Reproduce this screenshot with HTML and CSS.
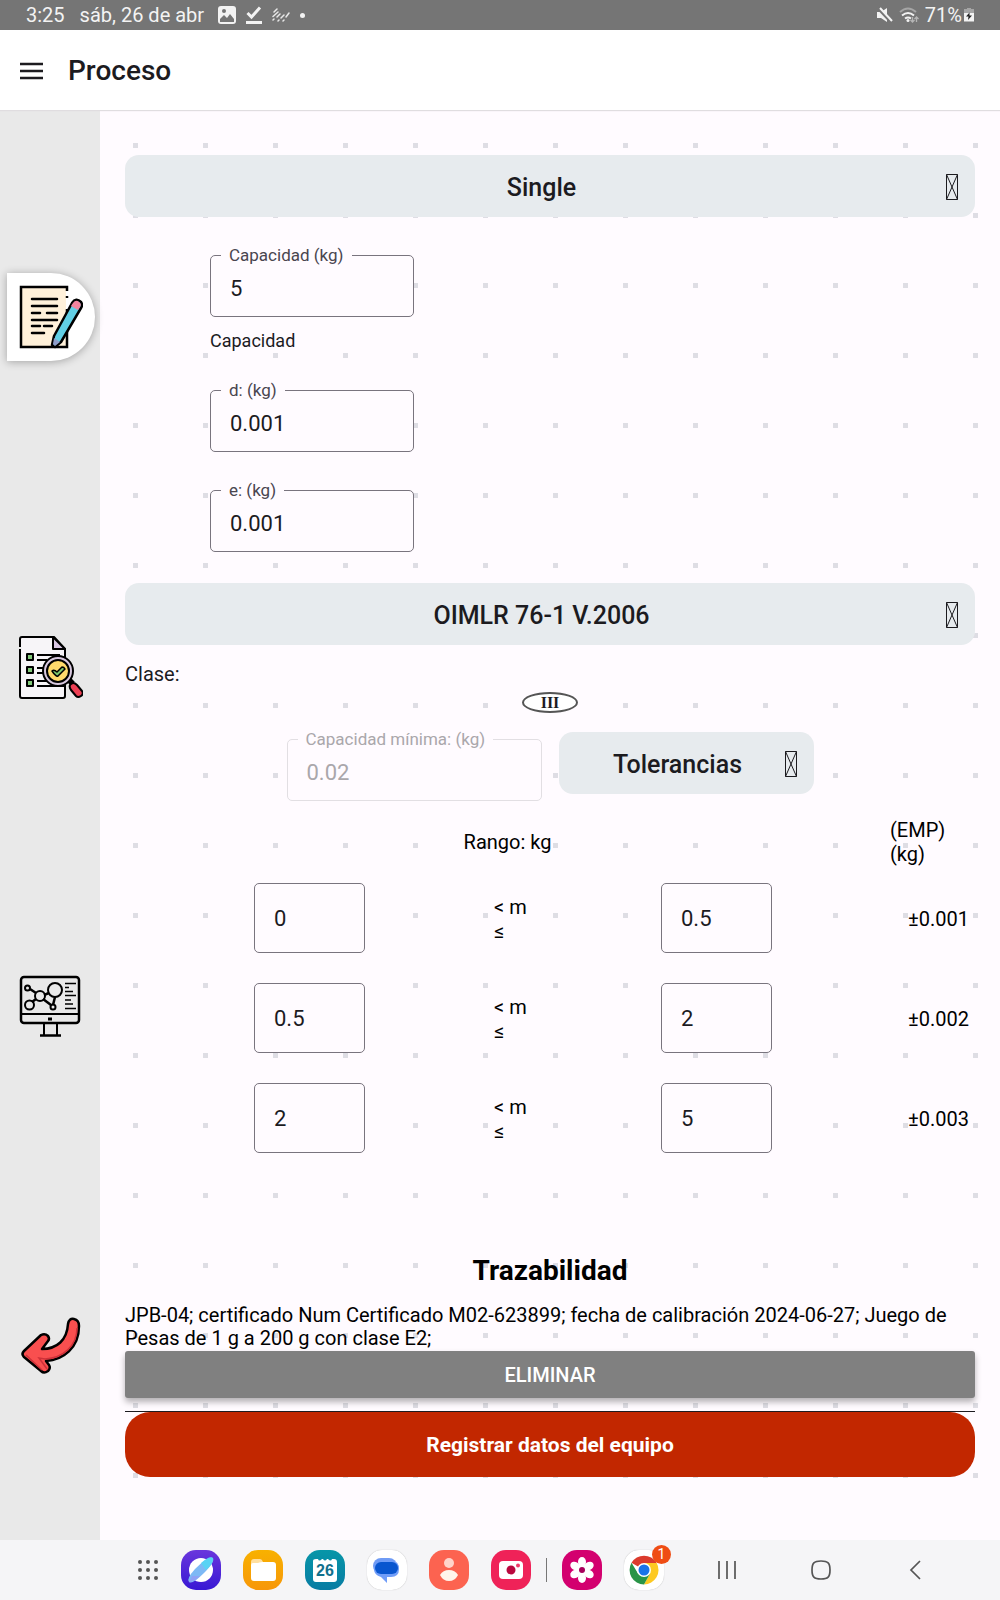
FILE: index.html
```html
<!DOCTYPE html>
<html lang="es">
<head>
<meta charset="utf-8">
<meta name="viewport" content="width=device-width, initial-scale=1">
<title>Proceso</title>
<link rel="stylesheet" href="styles.css">
</head>
<body>
<div class="status">
  <span>3:25</span>
  <span class="status-date">sáb, 26 de abr</span>
  <svg width="18" height="18" viewBox="0 0 18 18"><rect x="0" y="0" width="18" height="18" rx="3" fill="#f3f3f3"/><path d="M2 13l4-4 3 3 3-4 4 5v3H2z" fill="#757575"/><circle cx="6" cy="5" r="2" fill="#757575"/></svg>
  <svg width="16" height="18" viewBox="0 0 16 18" fill="none" stroke="#f3f3f3"><path d="M1.500 7l4 4L14 1.500" stroke-width="3"/><path d="M0 16.500h16" stroke-width="3"/></svg>
  <svg width="18" height="16" viewBox="0 0 18 16" fill="none" stroke="#e8e8e8" stroke-width="1.500" stroke-linecap="round"><path d="M2 5l3-3M1 9.500L6 5M1 13l1-1M5 10l3-3M6 14l1-1M9 11l3-3M11 14l1-1M14 10l3-4"/></svg>
  <span class="status-dot"></span>
  <div class="status-right">
    <svg width="16" height="16" viewBox="0 0 16 16"><path d="M0 5h4l6-4v14l-6-4H0z" fill="#f3f3f3"/><path d="M1 1l13 14" stroke="#757575" stroke-width="3"/><path d="M3 1l12 13" stroke="#f3f3f3" stroke-width="2"/></svg>
    <svg width="20" height="16" viewBox="0 0 20 16" fill="none" stroke-width="2"><path d="M1 5q8-7 16 0" stroke="#a5a5a5"/><path d="M3 8.500q6-5 12 0" stroke="#f3f3f3"/><path d="M6 11.500q3-2 6 0" stroke="#f3f3f3"/><circle cx="9" cy="13.500" r="1.500" fill="#f3f3f3"/><path d="M13.500 10v4m-2-1l2 2 2-2M17.500 15v-5m-2 2l2-2 2 2" stroke="#b5b5b5" stroke-width="1.300"/></svg>
    <span>71%</span>
    <svg width="10" height="14" viewBox="0 0 10 14"><path d="M3 0h4v1h3v4H0V1h3z" fill="#a5a5a5"/><path d="M0 5h10v8.500H0z" fill="#f3f3f3"/><path d="M5.500 4.500L2 8.500h2.500L4 12l4-4.500H5.500z" fill="#222"/></svg>
  </div>
</div>

<header class="appbar">
  <button class="menu" aria-label="Menú"><svg width="24" height="18" viewBox="0 0 24 18" stroke="#1c1b1f" stroke-width="2.300"><path d="M0 2h23M0 9h23M0 16h23"/></svg></button>
  <h1>Proceso</h1>
</header>

<div class="body">
  <nav class="side">
    <button class="side-item active" aria-label="Datos">
      <svg width="64" height="64" viewBox="0 0 64 64"><path d="M3 3h44v58H3z" fill="#fff1da"/><path d="M48 6V2H2v60h46V24M48 11v2" fill="none" stroke="#000" stroke-width="2.500"/><path d="M13 14h25M13 21h25M13 28h8M28 28h10M13 35h25M13 41h8M25 41h8M13 48h12" stroke="#000" stroke-width="2.500" stroke-linecap="round"/><path d="M35 51L53 18q4-6 9-1 2 3 0 6L42 57l-6 5-3-2z" fill="#61cfe5" stroke="#000" stroke-width="2.500" stroke-linejoin="round"/><path d="M54 18q3-4 6-1 3 2 1 5l-2 3-7-4z" fill="#f2849e"/><path d="M35 53l6 4-5 4-2-2z" fill="#8d9cc9"/></svg>
    </button>
    <button class="side-item" aria-label="Revisión">
      <svg width="64" height="64" viewBox="0 0 64 64" stroke="#000" stroke-width="2" stroke-linejoin="round"><path d="M35 1H3Q1 1 1 3v57q0 2 2 2h41q2 0 2-2V13z" fill="#f7f5f8"/><path d="M34 1v12h12z" fill="#d9c7e3"/><path d="M1 11v2" stroke="#e9e9e9" stroke-width="3"/><g fill="#82c979"><path d="M8 18h6v6H8zM8 31h6v6H8zM8 44h6v6H8z"/></g><path d="M18 19h23M18 24h10M18 32h6M18 37h6M18 45h12M18 50h27" /><path d="M50 48l4-4" stroke-width="5"/><path d="M51 49q3-4 7 0l5 6q2 3-1 5t-5 0l-5-6q-2-3-1-5z" fill="#ed4054"/><circle cx="39" cy="35" r="15" fill="#d8c8df"/><circle cx="39" cy="35" r="11" fill="#ffda6c"/><path d="M33 35q2-2 5 1l5-5q2 0 3 2l-7 7q-2 1-6-5z" fill="#7cc66d" stroke-width="1.500"/></svg>
    </button>
    <button class="side-item" aria-label="Análisis">
      <svg width="64" height="64" viewBox="0 0 64 64" fill="none" stroke="#000" stroke-width="2"><rect x="2" y="3" width="58" height="46" rx="3" stroke-width="2.500"/><path d="M2 40h58M25 49v12M38 49v12"/><path d="M21 61.500h21" stroke-width="2.500"/><path d="M29 45h4" stroke-width="3"/><circle cx="36" cy="16" r="7"/><circle cx="21" cy="22" r="5"/><circle cx="8.500" cy="14" r="2.500"/><circle cx="10.500" cy="31" r="4.500"/><circle cx="34" cy="33" r="2.500"/><path d="M11 15l6 4M17 25l-4 3M25 21l5-2M24 25l8 6M36 23l-2 8" stroke-width="2.500"/><path d="M46 9.500h11M46 13.500h4M46 17.500h8M46 21.500h11M46 26h6M46 30h8M46 34.500h11" stroke-width="1.700"/></svg>
    </button>
    <button class="side-item" aria-label="Volver">
      <svg width="64" height="64" viewBox="0 0 64 64"><path d="M49 11q1-6 6-5 5 1 5 7c0 22-16 34-33 35l3 4q2 3-1 6-4 3-7 0L5 44q-3-3 0-6l17-16q4-2 7 1 2 3 0 5l-6 8C38 36 48 27 49 11z" fill="#f94f4f" stroke="#000" stroke-width="2.500" stroke-linejoin="round"/><path d="M58 15c0 18-14 30-32 31l-6-1 8 11M7 42l16 15" fill="none" stroke="#ce3139" stroke-width="1.500"/></svg>
    </button>
  </nav>

  <main class="main">
    <button class="bar"><span>Single</span><svg class="tofu" width="12" height="26" viewBox="0 0 12 26"><path d="M.5.5h11v25H.5zL11.500 25.500M11.500.5L.5 25.500"/></svg></button>

    <div class="fields">
      <div class="field"><input id="cap" value="5"><label for="cap">Capacidad (kg)</label></div>
      <p class="helper">Capacidad</p>
      <div class="field"><input id="d" value="0.001"><label for="d">d: (kg)</label></div>
      <div class="field"><input id="e" value="0.001"><label for="e">e: (kg)</label></div>
    </div>

    <button class="bar"><span>OIMLR 76-1 V.2006</span><svg class="tofu" width="12" height="26" viewBox="0 0 12 26"><path d="M.5.5h11v25H.5zL11.500 25.500M11.500.5L.5 25.500"/></svg></button>

    <p class="clase">Clase:</p>
    <div class="oval">III</div>

    <div class="pair">
      <div class="field off"><input id="min" value="0.02" disabled><label for="min">Capacidad mínima: (kg)</label></div>
      <button class="bar"><span>Tolerancias</span><svg class="tofu" width="12" height="26" viewBox="0 0 12 26"><path d="M.5.5h11v25H.5zL11.500 25.500M11.500.5L.5 25.500"/></svg></button>
    </div>

    <table class="range">
      <colgroup><col class="c-from"><col class="c-op"><col class="c-to"><col class="c-emp"></colgroup>
      <thead><tr><th class="rango" colspan="3">Rango: kg</th><th>(EMP)<br>(kg)</th></tr></thead>
      <tbody>
        <tr><td class="from"><input aria-label="Desde 1" value="0"></td><td class="op">&lt; m<br>≤</td><td><input aria-label="Hasta 1" value="0.5"></td><td class="emp">±0.001</td></tr>
        <tr><td class="from"><input aria-label="Desde 2" value="0.5"></td><td class="op">&lt; m<br>≤</td><td><input aria-label="Hasta 2" value="2"></td><td class="emp">±0.002</td></tr>
        <tr><td class="from"><input aria-label="Desde 3" value="2"></td><td class="op">&lt; m<br>≤</td><td><input aria-label="Hasta 3" value="5"></td><td class="emp">±0.003</td></tr>
      </tbody>
    </table>

    <h2>Trazabilidad</h2>
    <div class="trace">
      <p>JPB-04; certificado Num Certificado M02-623899; fecha de calibración 2024-06-27; Juego de Pesas de 1 g a 200 g con clase E2;</p>
      <button class="delete">ELIMINAR</button>
    </div>
    <button class="submit">Registrar datos del equipo</button>
  </main>
</div>

<footer class="dock">
  <button class="apps" aria-label="Aplicaciones"><svg width="22" height="22" viewBox="0 0 22 22" fill="#555"><circle cx="3" cy="3" r="2"/><circle cx="11" cy="3" r="2"/><circle cx="19" cy="3" r="2"/><circle cx="3" cy="11" r="2"/><circle cx="11" cy="11" r="2"/><circle cx="19" cy="11" r="2"/><circle cx="3" cy="19" r="2"/><circle cx="11" cy="19" r="2"/><circle cx="19" cy="19" r="2"/></svg></button>
  <button class="app internet" aria-label="Internet"><svg viewBox="0 0 40 40"><circle cx="20" cy="20" r="12" fill="#fff"/><path d="M8 32q-3-3 6-13Q28 5 32 8q2 4-9 15-12 12-15 9z" fill="#7db9f5"/><path d="M20 13q9-8 12-5 1 5-7 12z" fill="#58d3f4"/><path d="M11 26l-3 6q5 0 11-6z" fill="#8fa2f5"/></svg></button>
  <button class="app files" aria-label="Archivos"><svg viewBox="0 0 40 40"><path d="M8 12q0-3 3-3h6q2 0 3 3h-1L8 16z" fill="#ffdfa0"/><path d="M8 15q0-2 2-2l5 0q2-1 4-1h11q3 0 3 3v13q0 3-3 3H11q-3 0-3-3z" fill="#fff"/></svg></button>
  <button class="app calendar" aria-label="Calendario"><svg viewBox="0 0 40 40"><path d="M8 11q0-2 3-2h2q1 3 4 0h1q2 3 4 0h1q3 3 4 0h2q3 0 3 3v17q0 3-3 3H11q-3 0-3-3z" fill="#fff"/></svg><b>26</b></button>
  <button class="app messages" aria-label="Mensajes"><svg viewBox="0 0 40 40"><rect x="6" y="8" width="24" height="16" rx="8" fill="#6f9bf5"/><path d="M14 11h11q7 0 7 8t-8 8h-4v6l-6-6q-7-2-7-8t7-8z" fill="#709df8"/><rect x="8" y="12" width="23" height="12" rx="6" fill="#0956cf"/></svg></button>
  <button class="app contacts" aria-label="Contactos"><svg viewBox="0 0 40 40"><circle cx="20" cy="13" r="5" fill="#ffd3ca"/><path d="M11 25q3-5 9-5t9 5q-3 6-9 6t-9-6z" fill="#fff5ec"/></svg></button>
  <button class="app camera" aria-label="Cámara"><svg viewBox="0 0 40 40"><rect x="8" y="11" width="24" height="18" rx="4" fill="#fff"/><circle cx="20" cy="20" r="4.500" fill="#b9083e"/><circle cx="27" cy="15.500" r="2" fill="#ef3b68"/></svg></button>
  <span class="divider"></span>
  <button class="app gallery" aria-label="Galería"><svg viewBox="0 0 40 40" fill="#fff"><ellipse cx="20" cy="12" rx="4" ry="5"/><ellipse cx="20" cy="28" rx="4" ry="5"/><ellipse cx="20" cy="12" rx="4" ry="5" transform="rotate(60 20 20)"/><ellipse cx="20" cy="12" rx="4" ry="5" transform="rotate(120 20 20)"/><ellipse cx="20" cy="12" rx="4" ry="5" transform="rotate(240 20 20)"/><ellipse cx="20" cy="12" rx="4" ry="5" transform="rotate(300 20 20)"/><circle cx="20" cy="20" r="6"/><circle cx="20" cy="20" r="3" fill="#a7005c"/></svg></button>
  <button class="app chrome" aria-label="Chrome"><svg viewBox="0 0 40 40"><path d="M20 20L7.500 12.800A14.500 14.500 0 0 1 32.500 12.800z" fill="#db3b2d"/><path d="M20 13h12.700A14.500 14.500 0 0 1 20 34.500l6-11z" fill="#fdc922"/><path d="M7.500 12.800A14.500 14.500 0 0 0 20 34.500l6.100-11L14 23.500z" fill="#299447"/><circle cx="20" cy="20" r="7" fill="#fff"/><circle cx="20" cy="20" r="5.500" fill="#1a73e8"/></svg><span class="badge">1</span></button>
  <div class="keys">
    <button aria-label="Recientes"><svg width="20" height="20" viewBox="0 0 20 20" stroke="#555" stroke-width="1.700"><path d="M2 1v18M10 1v18M18 1v18"/></svg></button>
    <button aria-label="Inicio"><svg width="20" height="20" viewBox="0 0 20 20" fill="none" stroke="#555" stroke-width="1.700"><path d="M10 1c7 0 9 2 9 9s-2 9-9 9-9-2-9-9 2-9 9-9z"/></svg></button>
    <button aria-label="Atrás"><svg width="12" height="20" viewBox="0 0 12 20" fill="none" stroke="#555" stroke-width="1.700"><path d="M11 1L2 10l9 9"/></svg></button>
  </div>
</footer>
</body>
</html>
```
FILE: styles.css
```css
* { box-sizing: border-box; }
body {
  margin: 0;
  min-height: 100vh;
  display: flex;
  flex-direction: column;
  font-family: Roboto, "Liberation Sans", sans-serif;
  font-size: 20px;
  color: #1c1b1f;
  background: #fffbff;
}
button { font: inherit; color: inherit; border: 0; padding: 0; background: none; }
h1, h2, p { margin: 0; }
svg { display: block; flex: none; }

.status {
  height: 30px;
  padding: 0 26px;
  display: flex;
  align-items: center;
  gap: 10px;
  background: #757575;
  color: #f3f3f3;
}
.status-date { margin: 0 4px 0 5px; }
.status-dot { width: 5px; height: 5px; border-radius: 50%; background: #f3f3f3; }
.status-right { margin-left: auto; display: flex; align-items: center; gap: 6px; }
.status-right span + svg { margin-left: -4px; }

.appbar {
  height: 80px;
  padding: 2px 20px 0;
  display: flex;
  align-items: center;
  gap: 24px;
  background: #fff;
  box-shadow: 0 1px 1px #e0dde0;
  position: relative;
}
.appbar h1 { font-size: 28px; font-weight: 500; line-height: 32px; }

.body { flex: 1; display: flex; }
.side {
  flex: none;
  width: 100px;
  padding: 163px 0;
  display: flex;
  flex-direction: column;
  justify-content: space-between;
  background: #e9e9e9;
}
.side-item { padding-left: 19px; }
.side-item.active {
  width: 88px;
  height: 88px;
  margin-left: 7px;
  padding-left: 12px;
  background: #fff;
  border-radius: 0 44px 44px 0;
  box-shadow: 0 1px 8px rgba(0, 0, 0, 0.3);
}

.main {
  flex: 1;
  padding: 45px 25px;
  display: flex;
  flex-direction: column;
  background: conic-gradient(from 270deg at 5px 5px, #dedde4 90deg, transparent 0) 33px 33px / 70px 70px;
}
.bar {
  width: 100%;
  height: 62px;
  padding: 2px 17px 0;
  display: flex;
  align-items: center;
  gap: 5px;
  background: #e7ebee;
  border-radius: 14px;
  font-size: 25px;
  font-weight: 500;
}
.bar span { flex: 1; }
.tofu { fill: none; stroke: #1c1b1f; stroke-width: 1; }

.fields { width: 204px; margin: 38px 85px 31px; }
.field { position: relative; }
.field + .field { margin-top: 38px; }
.helper + .field { margin-top: 37px; }
.helper { margin-top: 12px; font-size: 18px; line-height: 24px; }
input {
  display: block;
  width: 100%;
  height: 62px;
  padding: 4px 19px 0;
  font: 22px Roboto, "Liberation Sans", sans-serif;
  color: #1c1b1f;
  background: #fffbff;
  border: 1px solid #79747e;
  border-radius: 5px;
}
.field label {
  position: absolute;
  top: -11px;
  left: 11px;
  padding: 0 8px;
  font-size: 17px;
  line-height: 22px;
  color: #49454f;
  background: #fffbff;
}
.off input { color: #aaa7ab; border-color: #e2dfe3; }
.off label { color: #aaa7ab; }

.clase { margin-top: 17px; line-height: 24px; }
.oval {
  align-self: center;
  width: 56px;
  height: 21px;
  margin: 6px 0 19px;
  border: 2px solid #555;
  border-radius: 50%;
  background: #fff;
  font: bold 16px/17px "Liberation Serif", serif;
  text-align: center;
}
.pair { height: 69px; display: flex; justify-content: center; gap: 17px; }
.pair > * { width: 30%; }
.pair .field { align-self: flex-end; }

.range {
  width: 100%;
  margin-top: 17px;
  table-layout: fixed;
  border-collapse: collapse;
  line-height: 24px;
  color: #000;
}
.range th { padding: 0 0 2px; font-weight: 400; text-align: left; }
.range th.rango { text-align: center; }
.range td { height: 100px; padding: 0; }
.range input { width: 111px; height: 70px; padding-top: 0; }
.c-from { width: 369px; }
.c-to { width: 229px; }
.c-emp { width: 85px; }
.range .from { padding-left: 129px; }
.range .op { padding-top: 2px; }
.range .emp { padding: 2px 0 0 18px; }

h2 {
  margin-top: 87px;
  font-size: 28px;
  font-weight: 700;
  line-height: 32px;
  text-align: center;
  color: #000;
}
.trace { margin-top: 17px; padding-bottom: 13px; border-bottom: 1px solid #1c1b1f; color: #000; }
.trace p { padding-bottom: 1px; line-height: 23px; }
.delete {
  display: block;
  width: 100%;
  height: 47px;
  border-radius: 3px;
  background: #808080;
  color: #fff;
  font-weight: 500;
  box-shadow: 0 4px 6px rgba(0, 0, 0, 0.3);
}
.submit {
  height: 65px;
  border-radius: 25px;
  background: #c22700;
  color: #fff;
  font-size: 21px;
  font-weight: 700;
}

.dock {
  height: 60px;
  padding-left: 137px;
  display: flex;
  align-items: center;
  gap: 22px;
  background: #f5f5f7;
}
.app { position: relative; width: 40px; height: 40px; border-radius: 15px; }
.app svg { width: 40px; height: 40px; }
.internet { background: linear-gradient(#6a36dc, #3818d4); }
.files { background: linear-gradient(#f8b100, #f79709); }
.calendar { background: linear-gradient(#0796a8, #087ca3); }
.calendar b {
  position: absolute;
  inset: 0;
  font: bold 16px/41px "Liberation Sans", sans-serif;
  color: #10708d;
}
.messages, .chrome { background: #fff; box-shadow: 0 0 1px rgba(0, 0, 0, 0.3); }
.contacts { background: #fc6350; }
.camera { background: #ef2258; }
.gallery { background: #d3006f; }
.divider { width: 1px; height: 24px; margin: 0 -7px; background: #777; }
.badge {
  position: absolute;
  top: -5px;
  right: -7px;
  width: 19px;
  height: 19px;
  border-radius: 50%;
  background: #ef4d14;
  color: #fff;
  font-size: 14px;
  line-height: 19px;
}
.keys { display: flex; margin-left: -6px; }
.keys button { width: 94px; height: 60px; display: flex; align-items: center; justify-content: center; }
```
